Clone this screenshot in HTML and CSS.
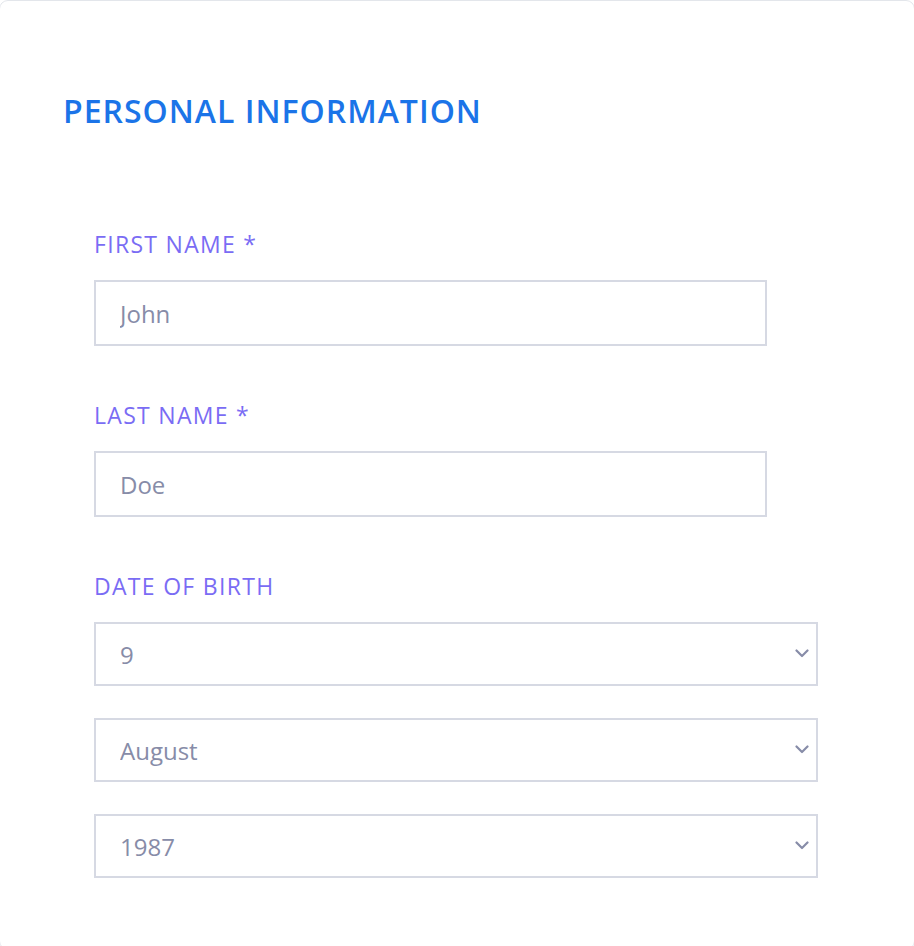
FILE: index.html
```html
<!DOCTYPE html>
<html lang="en">
<head>
<meta charset="utf-8">
<title>Personal Information</title>
<link rel="stylesheet" href="styles.css">
</head>
<body>
<div class="card">
  <h2 class="card-title">PERSONAL INFORMATION</h2>
  <form class="form">
    <div class="field">
      <label class="field-label" for="first">FIRST NAME *</label>
      <input class="text-input" id="first" type="text" value="John">
    </div>
    <div class="field">
      <label class="field-label" for="last">LAST NAME *</label>
      <input class="text-input" id="last" type="text" value="Doe">
    </div>
    <div class="field">
      <label class="field-label" for="day">DATE OF BIRTH</label>
      <div class="select-stack">
        <div class="select-wrap">
          <select class="select" id="day"><option>9</option></select>
          <svg class="chevron" width="14" height="9" viewBox="0 0 14 9"><path d="M1.5 1.5 L7 7 L12.5 1.5" fill="none" stroke="currentColor" stroke-width="2.2" stroke-linecap="round" stroke-linejoin="round"/></svg>
        </div>
        <div class="select-wrap">
          <select class="select"><option>August</option></select>
          <svg class="chevron" width="14" height="9" viewBox="0 0 14 9"><path d="M1.5 1.5 L7 7 L12.5 1.5" fill="none" stroke="currentColor" stroke-width="2.2" stroke-linecap="round" stroke-linejoin="round"/></svg>
        </div>
        <div class="select-wrap">
          <select class="select"><option>1987</option></select>
          <svg class="chevron" width="14" height="9" viewBox="0 0 14 9"><path d="M1.5 1.5 L7 7 L12.5 1.5" fill="none" stroke="currentColor" stroke-width="2.2" stroke-linecap="round" stroke-linejoin="round"/></svg>
        </div>
      </div>
    </div>
  </form>
</div>
</body>
</html>
```

FILE: styles.css
```css
html, body {
  margin: 0;
  padding: 0;
  background: #ffffff;
  font-family: "Open Sans", "Noto Sans", sans-serif;
}

.card {
  margin: 0 -1px;
  border: 1px solid #e3e6eb;
  border-radius: 9px;
  background: #ffffff;
  padding: 88px 0 60px 63px;
  min-height: 800px;
}

.card-title {
  margin: 0;
  font-size: 32px;
  line-height: normal;
  font-weight: 600;
  letter-spacing: 1px;
  color: #1b74e8;
}

.form {
  margin-top: 96px;
  padding-left: 31px;
  display: flex;
  flex-direction: column;
  gap: 53px;
}

.field {
  display: flex;
  flex-direction: column;
  gap: 20px;
}

.field-label {
  font-size: 23px;
  line-height: normal;
  font-weight: 400;
  letter-spacing: 1.3px;
  color: #7a6cf4;
}

.text-input,
.select {
  box-sizing: border-box;
  height: 66px;
  border: 2px solid #d6d9e3;
  border-radius: 0;
  background: #ffffff;
  padding: 0 0 0 24px;
  font-family: "Open Sans", "Noto Sans", sans-serif;
  font-size: 24px;
  color: #878ca8;
  outline: none;
  margin: 0;
}

.text-input {
  width: 673px;
}

.select-stack {
  display: flex;
  flex-direction: column;
  gap: 32px;
  width: 724px;
}

.select-wrap {
  position: relative;
}

.select {
  width: 100%;
  height: 64px;
  -webkit-appearance: none;
  appearance: none;
  display: block;
}

.chevron {
  position: absolute;
  right: 9px;
  top: 27px;
  color: #878ca8;
  pointer-events: none;
}
```
